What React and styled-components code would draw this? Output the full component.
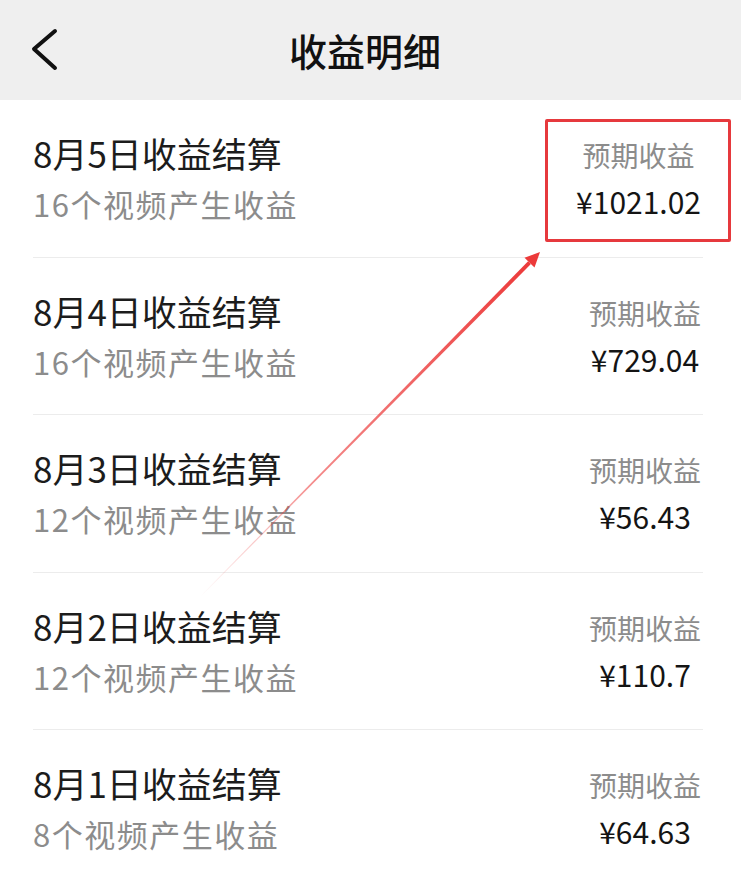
import React from 'react';
import styled, { createGlobalStyle } from 'styled-components';

const records = [
  { date: '8月5日', videos: 16, amount: '1021.02', highlighted: true },
  { date: '8月4日', videos: 16, amount: '729.04' },
  { date: '8月3日', videos: 12, amount: '56.43' },
  { date: '8月2日', videos: 12, amount: '110.7' },
  { date: '8月1日', videos: 8, amount: '64.63' }
];

export default function App() {
  return (
    <Page>
      <GlobalStyle />
      <Header>
        <BackButton aria-label='返回'>
          <svg width='30' height='44' viewBox='0 0 30 44'>
            <polyline
              points='25,3 4,21 25,40'
              fill='none'
              stroke='#111'
              strokeWidth='4'
              strokeLinecap='round'
              strokeLinejoin='round'
            />
          </svg>
        </BackButton>
        <Title>收益明细</Title>
        <span />
      </Header>

      <List>
        {records.map((item) => (
          <Row key={item.date}>
            <Info>
              <RowTitle>{item.date}收益结算</RowTitle>
              <RowSub>{item.videos}个视频产生收益</RowSub>
            </Info>
            <Income highlighted={item.highlighted}>
              <IncomeLabel>预期收益</IncomeLabel>
              <IncomeValue>¥{item.amount}</IncomeValue>
            </Income>
          </Row>
        ))}
      </List>

      {/* annotation arrow pointing at the first amount */}
      <Arrow width='741' height='870' viewBox='0 0 741 870'>
        <defs>
          <linearGradient
            id='arrowFade'
            gradientUnits='userSpaceOnUse'
            x1='200'
            y1='597'
            x2='530'
            y2='262'
          >
            <stop offset='0' stopColor='#ec3a3a' stopOpacity='0' />
            <stop offset='0.35' stopColor='#ec3a3a' stopOpacity='0.6' />
            <stop offset='1' stopColor='#ec3a3a' stopOpacity='1' />
          </linearGradient>
        </defs>
        <polygon
          points='199.8,596.8 200.2,597.2 530.9,264.1 528.1,261.3'
          fill='url(#arrowFade)'
        />
        <polygon points='540,252 534.5,267.6 524.5,257.8' fill='#ec3a3a' />
      </Arrow>
    </Page>
  );
}

const GlobalStyle = createGlobalStyle`
  html, body {
    margin: 0;
    padding: 0;
    background: #ffffff;
  }
  body {
    font-family: "Noto Sans CJK SC", "Noto Sans", sans-serif;
    overflow: hidden;
  }
`;

const Page = styled.div`
  position: relative;
  width: 741px;
  height: 870px;
  overflow: hidden;
  background: #ffffff;
`;

const Header = styled.header`
  display: grid;
  grid-template-columns: 1fr auto 1fr;
  align-items: center;
  height: 100px;
  background: #efefef;
`;

const BackButton = styled.div`
  display: flex;
  align-items: center;
  padding-left: 30px;
  margin-top: -1px;
`;

const Title = styled.h1`
  margin: 0 11px 0 0;
  font-size: 38px;
  font-weight: 500;
  color: #111;
  line-height: 1;
`;

const List = styled.ul`
  margin: 0;
  padding: 0;
  list-style: none;
`;

const Row = styled.li`
  display: flex;
  justify-content: space-between;
  align-items: flex-start;
  margin: 0 38px 0 33px;
  padding: 28px 2px 26.5px 0;
  border-bottom: 1px solid #ececec;
`;

const Info = styled.div`
  display: flex;
  flex-direction: column;
`;

const RowTitle = styled.div`
  font-size: 35px;
  line-height: 50px;
  color: #1c1c1c;
`;

const RowSub = styled.div`
  font-size: 31px;
  line-height: 52px;
  letter-spacing: 1.5px;
  color: #8c8c8c;
`;

const Income = styled.div`
  position: relative;
  display: flex;
  flex-direction: column;
  align-items: center;
  margin-top: 4px;

  &::after {
    content: '';
    display: ${(p) => (p.highlighted ? 'block' : 'none')};
    position: absolute;
    top: -13px;
    bottom: -18px;
    left: -31px;
    right: -30px;
    border: 3px solid #e6393d;
    border-radius: 2px;
  }
`;

const IncomeLabel = styled.div`
  font-size: 28px;
  line-height: 46px;
  color: #8c8c8c;
`;

const IncomeValue = styled.div`
  font-size: 30px;
  line-height: 46px;
  font-weight: 400;
  color: #141414;
`;

const Arrow = styled.svg`
  position: absolute;
  top: 0;
  left: 0;
  pointer-events: none;
`;
